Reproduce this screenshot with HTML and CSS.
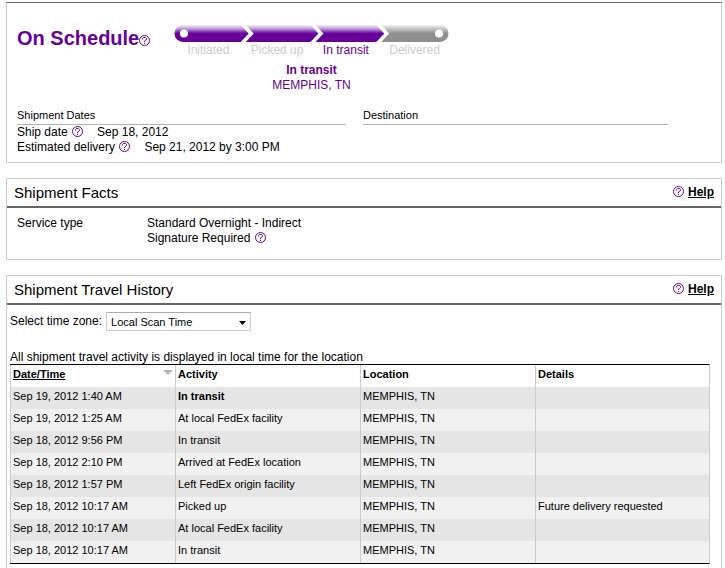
FILE: index.html
```html
<!DOCTYPE html>
<html lang="en">
<head>
    <meta charset="UTF-8">
    <meta name="viewport" content="width=device-width, initial-scale=1.0">
    <title>Shipment Tracking</title>
    <link rel="stylesheet" href="styles.css">
</head>
<body>
    <svg class="symbols" aria-hidden="true">
        <symbol id="help-icon" viewBox="0 0 11 11">
            <circle cx="5.5" cy="5.5" r="5" fill="#fff" stroke="#609" stroke-width="1"/>
            <path d="M3.5 4.5V3.5L4.5 2.5H6.5L7.5 3.5V4.5L5.5 6V7.2" fill="none" stroke="#609" stroke-width="1"/>
            <rect x="5" y="8" width="1" height="1" fill="#609"/>
        </symbol>
    </svg>

    <section class="panel summary">
        <div class="status-row">
            <h1>On Schedule<svg class="help-icon"><use href="#help-icon"/></svg></h1>
            <div class="tracker">
                <svg class="bar" viewBox="0 0 276 17">
                    <defs>
                        <linearGradient id="done" x1="0" y1="0" x2="0" y2="1">
                            <stop offset="0" stop-color="#f4eef9"/>
                            <stop offset="0.2" stop-color="#c4a3da"/>
                            <stop offset="0.5" stop-color="#609"/>
                            <stop offset="1" stop-color="#609"/>
                        </linearGradient>
                        <linearGradient id="todo" x1="0" y1="0" x2="0" y2="1">
                            <stop offset="0" stop-color="#f3f3f3"/>
                            <stop offset="0.2" stop-color="#c8c9c8"/>
                            <stop offset="0.5" stop-color="#8e908e"/>
                            <stop offset="1" stop-color="#8e908e"/>
                        </linearGradient>
                    </defs>
                    <path d="M9 0H67L75 8.5L67 17H9A8.5 8.5 0 0 1 9 0Z" fill="url(#done)"/>
                    <path d="M72 0H137L145 8.5L137 17H72L80 8.5Z" fill="url(#done)"/>
                    <path d="M142 0H203L211 8.5L203 17H142L150 8.5Z" fill="url(#done)"/>
                    <path d="M208 0H267A8.5 8.5 0 0 1 267 17H208L216 8.5Z" fill="url(#todo)"/>
                    <circle cx="10" cy="8.5" r="4" fill="#fff"/>
                    <circle cx="266" cy="8.5" r="4" fill="#fff"/>
                </svg>
                <ol class="steps">
                    <li>Initiated</li>
                    <li>Picked up</li>
                    <li class="current">In transit</li>
                    <li>Delivered</li>
                </ol>
                <p class="position"><strong>In transit</strong><br>MEMPHIS, TN</p>
            </div>
        </div>
        <div class="columns">
            <div>
                <h3>Shipment Dates</h3>
                <p>Ship date <svg class="help-icon"><use href="#help-icon"/></svg><span class="date">Sep 18, 2012</span></p>
                <p>Estimated delivery <svg class="help-icon"><use href="#help-icon"/></svg><span class="date">Sep 21, 2012 by 3:00 PM</span></p>
            </div>
            <div>
                <h3>Destination</h3>
            </div>
        </div>
    </section>

    <section class="panel facts">
        <div class="panel-head">
            <h2>Shipment Facts</h2>
            <span class="help"><svg class="help-icon"><use href="#help-icon"/></svg><a href="#">Help</a></span>
        </div>
        <dl>
            <dt>Service type</dt>
            <dd>Standard Overnight - Indirect<br>Signature Required <svg class="help-icon"><use href="#help-icon"/></svg></dd>
        </dl>
    </section>

    <section class="panel history">
        <div class="panel-head">
            <h2>Shipment Travel History</h2>
            <span class="help"><svg class="help-icon"><use href="#help-icon"/></svg><a href="#">Help</a></span>
        </div>
        <div class="history-body">
            <div class="zone">
                <label for="timezone">Select time zone:</label>
                <span class="select-wrap">
                    <select id="timezone">
                        <option>Local Scan Time</option>
                    </select>
                    <svg class="arrow" viewBox="0 0 7 4"><path d="M0 0H7L3.5 4Z" fill="#000"/></svg>
                </span>
            </div>
            <p>All shipment travel activity is displayed in local time for the location</p>
            <table>
                <thead>
                    <tr>
                        <th class="col-date"><div class="sort"><a href="#">Date/Time</a><svg viewBox="0 0 10 5"><path d="M0 0H10L5 5Z" fill="#b3b3b3"/></svg></div></th>
                        <th class="col-activity">Activity</th>
                        <th class="col-location">Location</th>
                        <th>Details</th>
                    </tr>
                </thead>
                <tbody>
                    <tr><td>Sep 19, 2012 1:40 AM</td><td><strong>In transit</strong></td><td>MEMPHIS, TN</td><td></td></tr>
                    <tr><td>Sep 19, 2012 1:25 AM</td><td>At local FedEx facility</td><td>MEMPHIS, TN</td><td></td></tr>
                    <tr><td>Sep 18, 2012 9:56 PM</td><td>In transit</td><td>MEMPHIS, TN</td><td></td></tr>
                    <tr><td>Sep 18, 2012 2:10 PM</td><td>Arrived at FedEx location</td><td>MEMPHIS, TN</td><td></td></tr>
                    <tr><td>Sep 18, 2012 1:57 PM</td><td>Left FedEx origin facility</td><td>MEMPHIS, TN</td><td></td></tr>
                    <tr><td>Sep 18, 2012 10:17 AM</td><td>Picked up</td><td>MEMPHIS, TN</td><td>Future delivery requested</td></tr>
                    <tr><td>Sep 18, 2012 10:17 AM</td><td>At local FedEx facility</td><td>MEMPHIS, TN</td><td></td></tr>
                    <tr><td>Sep 18, 2012 10:17 AM</td><td>In transit</td><td>MEMPHIS, TN</td><td></td></tr>
                </tbody>
            </table>
        </div>
    </section>
</body>
</html>
```

FILE: styles.css
```css
* {
    box-sizing: border-box;
}
body {
    margin: 2px 3px 0 6px;
    font-family: "Liberation Sans", Arial, sans-serif;
    font-size: 12px;
    line-height: 15px;
    color: #000;
    background-color: #fff;
}
h1, h2, h3, p, dl, dd, ol {
    margin: 0;
    padding: 0;
}
.symbols {
    display: none;
}
.help-icon {
    width: 11px;
    height: 11px;
    vertical-align: -1px;
}
p .help-icon, dd .help-icon {
    margin-left: 1px;
}
.panel {
    border: 1px solid #ccc;
    margin-bottom: 15px;
}

/* summary */
.summary {
    border-top-color: #666;
    padding: 22px 53px 7px 10px;
}
.status-row {
    display: flex;
    height: 82px;
}
h1 {
    width: 157px;
    font-size: 20px;
    line-height: 26px;
    color: #609;
    white-space: nowrap;
}
.tracker {
    width: 275px;
    text-align: center;
    color: #609;
}
.bar {
    display: block;
    width: 100%;
    height: 17px;
}
.steps {
    display: grid;
    grid-template-columns: repeat(4, 1fr);
    list-style: none;
    color: #ccc;
    margin: 1px 0 5px;
}
.steps .current {
    color: #609;
}
.columns {
    display: grid;
    grid-template-columns: 329fr 305fr;
    gap: 17px;
}
h3 {
    font-size: 11px;
    font-weight: normal;
    line-height: 17px;
    border-bottom: 1px solid #b3b3b3;
}
.date {
    margin-left: 14px;
}

/* panel headings */
.panel-head {
    display: flex;
    justify-content: space-between;
    align-items: center;
    height: 29px;
    padding: 0 7px;
    border-bottom: 2px solid #666;
}
h2 {
    font-size: 15px;
    font-weight: normal;
}
.help a {
    margin-left: 4px;
    font-weight: bold;
    color: #000;
}

/* facts */
.facts dl {
    display: grid;
    grid-template-columns: 130px 1fr;
    padding: 8px 10px 13px;
}

/* travel history */
.history {
    margin-bottom: 0;
    border-bottom: 0;
}
.history-body {
    padding: 7px 11px 4px 3px;
}
.history-body p {
    line-height: 14px;
}
.zone {
    display: flex;
    align-items: center;
    gap: 4px;
    margin-bottom: 19px;
}
.select-wrap {
    position: relative;
}
select {
    display: block;
    appearance: none;
    width: 145px;
    height: 19px;
    padding: 0 4px;
    font-family: inherit;
    font-size: 11px;
    color: #000;
    background-color: #fff;
    border: 1px solid #ccccd6;
    border-top-color: #aaaab4;
    border-radius: 1px;
}
.arrow {
    position: absolute;
    right: 5px;
    top: 9px;
    width: 7px;
    height: 4px;
    pointer-events: none;
}
table {
    width: 100%;
    table-layout: fixed;
    border-spacing: 0;
    border-top: 1px solid #000;
    border-bottom: 1px solid #000;
    border-right: 1px solid #ccc;
    font-size: 11px;
}
th, td {
    height: 22px;
    padding: 0 2px 3px;
    text-align: left;
    border-left: 1px solid #ccc;
}
.col-date {
    width: 165px;
}
.col-activity {
    width: 185px;
}
.col-location {
    width: 175px;
}
.sort {
    display: flex;
    justify-content: space-between;
    align-items: center;
}
.sort a {
    color: #000;
}
.sort svg {
    width: 10px;
    height: 5px;
    margin-bottom: 4px;
}
tbody tr {
    background-color: #f1f1f1;
}
tbody tr:nth-child(odd) {
    background-color: #e5e5e5;
}
```
